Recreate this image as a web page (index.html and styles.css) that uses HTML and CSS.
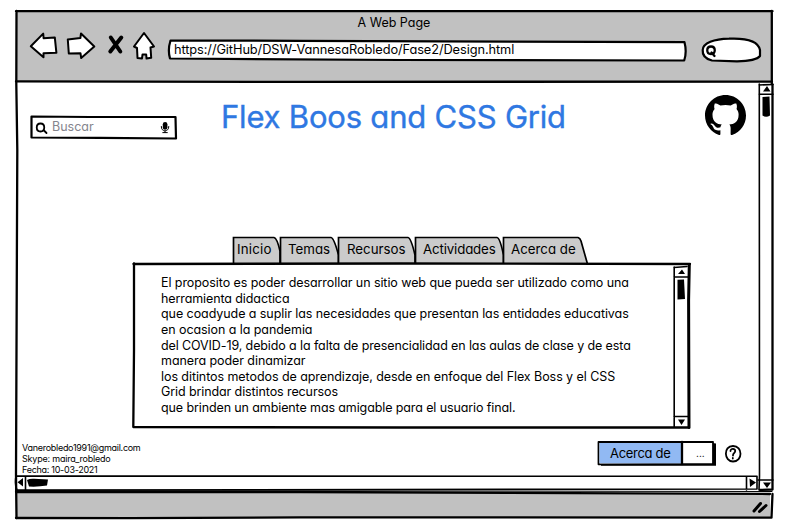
FILE: index.html
```html
<!DOCTYPE html>
<html lang="es">
<head>
<meta charset="utf-8">
<title>A Web Page</title>
<link rel="stylesheet" href="styles.css">
</head>
<body>
<div class="browser">
  <svg class="sketch frame" viewBox="14 9 760 512">
    <path class="grey" d="M16 11H772V82H16ZM16 493L770 493V517H16Z"/>
    <path class="line" d="M16 11.200H772.500M16.500 11L16.300 84L17.300 150L16 475L16.500 518M771.800 11V84"/>
    <path class="line" d="M16 81.400L300 81.900L772 81.600M16 492L300 492L770 494"/>
    <path class="line" d="M16 518L130 518.200L300 517.300L771.500 517.600L772.500 494"/>
    <path class="line thin" d="M16 490.500L772 491.500"/>
    <path class="line heavy" d="M754 511L760.500 503.500M759.500 511.500L766 505.500"/>
  </svg>
  <header class="chrome">
    <div class="window-title">A Web Page</div>
    <div class="toolbar">
      <svg class="nav" viewBox="28 30 130 32">
        <path class="shape" d="M30.800 46.300L43.200 33.600L43.600 38.200L54.800 37.400L56.400 52.800L43.500 53.200V57.200Z"/>
        <path class="shape" d="M67.800 39.500L80.400 38L81 33.500L94.300 46.500L81.200 58L80.500 53.300L68.800 53.500Z"/>
        <path class="cross" d="M110.800 37.500L120.300 51.500M121.300 37.500L110.300 51.500"/>
        <path class="shape" d="M144 33L154 46.500L150.500 47.500L151.200 57.800L146.500 58.500L146.200 54.500L142.500 54.500L142 58.500L137.500 58L137 48L134 46.500Z"/>
      </svg>
      <div class="address">
        <svg class="sketch" viewBox="166 38 522 26"><path class="shape box" d="M170.500 40.500L300 40.800L684.500 42.200Q687 52 684.200 60.500L400 60L170 58.500Q167.500 50 170.500 40.500Z"/></svg>
        <span class="t-url">https://GitHub/DSW-VannesaRobledo/Fase2/Design.html</span>
      </div>
      <svg class="quick" viewBox="700 36 64 28">
        <path class="shape box" d="M702.700 50C703 43 714 39 729 38.700C745 38 758 40 760 50V56Q756 61 737 61.300L712 60.500Q702 58 702.700 50Z"/>
        <path class="line" d="M711 46.500C706 46.500 706 54 711 54C716 54 716 46.500 711 46.500M711.500 52.500L714.500 56"/>
      </svg>
    </div>
  </header>
  <main class="page">
    <section class="content">
      <div class="top">
        <div class="search">
          <svg class="sketch" viewBox="30 114 148 27">
            <path class="shape box" d="M31.500 116.500L90 117L175.500 117L176 138.500L100 137.800L31.500 137.500Z"/>
            <path class="glass" d="M40.500 123.500C35.500 123.500 35.500 131.500 40.500 131.500C45.500 131.500 45.500 123.500 40.500 123.500M43.500 130L46.500 133"/>
            <rect x="162.800" y="122" width="4.600" height="7.800" rx="2.300"/>
            <path class="mic" d="M161.300 126.500C161 132.500 169 132.500 168.800 126.500M165 131V132.600M162.800 132.600H167.300"/>
          </svg>
          <span class="t-search">Buscar</span>
        </div>
        <h1 class="t-heading">Flex Boos and CSS Grid</h1>
        <svg class="logo" viewBox="0 0 16 16"><path d="M8 0C3.580 0 0 3.580 0 8c0 3.540 2.290 6.530 5.470 7.590.4.070.55-.17.55-.38 0-.19-.01-.82-.01-1.490-2.010.37-2.530-.49-2.690-.94-.09-.23-.48-.94-.82-1.130-.28-.15-.68-.52-.01-.53.63-.01 1.080.58 1.230.82.72 1.210 1.870.87 2.330.66.070-.52.28-.87.51-1.070-1.780-.2-3.640-.89-3.640-3.950 0-.87.31-1.590.82-2.150-.08-.2-.36-1.020.08-2.120 0 0 .67-.21 2.200.82.64-.18 1.320-.27 2-.27s1.360.09 2 .27c1.530-1.040 2.200-.82 2.200-.82.44 1.100.16 1.920.08 2.120.51.56.82 1.270.82 2.150 0 3.070-1.870 3.750-3.650 3.950.29.25.54.73.54 1.480 0 1.070-.01 1.930-.01 2.200 0 .21.15.46.55.38A8.010 8.010 0 0 0 16 8c0-4.420-3.580-8-8-8Z"/></svg>
      </div>
      <nav class="tabs">
        <svg class="sketch" viewBox="231 235 358 30">
          <path class="tab" d="M233.500 264V237.500H274Q277 238 280 251V264"/>
          <path class="tab" d="M280.500 264V237.500H331Q334 238 338.500 255V264"/>
          <path class="tab" d="M338.500 264V237.500H408Q411 238 415 255V264"/>
          <path class="tab" d="M415.500 264V237.500H497Q500 238 503.500 255V264"/>
          <path class="tab" d="M503.500 264V237.500H578Q580 238 581 241L587.500 264"/>
        </svg>
        <a class="t-inicio">Inicio</a><a class="t-temas">Temas</a><a class="t-recursos">Recursos</a><a class="t-activ">Actividades</a><a class="t-acerca">Acerca de</a>
      </nav>
      <article class="panel">
        <svg class="sketch" viewBox="131 262 560 167">
          <path class="line" d="M133.500 264L400 263.500L690 264"/>
          <path class="line" d="M134 263.500V350L133.300 427L400 427.500L689 427.500"/>
          <path class="line heavy2" d="M689.300 264.500L688.600 300L689 427.500"/>
          <path class="line thin2" d="M674.200 267V427M674 267.500L687 266.500M674 277H688M674 416.500H688"/>
          <path d="M678 274L682 269.500L685 274ZM678 419.500H685L681.500 425ZM677.500 279.800L684 279.500L685 299L677.500 299.500Z"/>
        </svg>
        <p><span class="l1">El proposito es poder desarrollar un sitio web que pueda ser utilizado como una</span>
        <span class="l2">herramienta didactica</span>
        <span class="l3">que coadyude a suplir las necesidades que presentan las entidades educativas</span>
        <span class="l4">en ocasion a la pandemia</span>
        <span class="l5">del COVID-19, debido a la falta de presencialidad en las aulas de clase y de esta</span>
        <span class="l6">manera poder dinamizar</span>
        <span class="l7">los ditintos metodos de aprendizaje, desde en enfoque del Flex Boss y el CSS</span>
        <span class="l8">Grid brindar distintos recursos</span>
        <span class="l9">que brinden un ambiente mas amigable para el usuario final.</span></p>
      </article>
      <div class="bottom">
        <address><span class="c1">Vanerobledo1991@gmail.com</span><span class="c2">Skype: maira_robledo</span><span class="c3">Fecha: 10-03-2021</span></address>
        <div class="split">
          <svg class="sketch" viewBox="596 440 120 27">
            <path d="M712.500 443L716 443.500V465.800H601V463H712.500Z"/>
            <path class="shape button" d="M598.500 442L713 441.800V464L598.500 464.300Z"/>
            <path class="blue" d="M599.500 443H681V463.300H599.500Z"/>
            <path class="line" d="M682 442V464"/>
          </svg>
          <span class="t-button">Acerca de</span><span class="t-dots">...</span>
        </div>
        <svg class="help" viewBox="723 444 20 20"><path class="glass" d="M733 446C723 446 724 461.500 733 461.500C743 461.500 743 446 733 446M730.500 451C730.500 448 735.500 448.500 735.200 451C735 453.500 733 453 733 455.500M732.800 458V458.500"/></svg>
      </div>
    </section>
    <svg class="vscroll" viewBox="758 83 16 408">
      <path class="line thin2" d="M759.300 84L759.500 476L759 490M759 85L773 84.500M759 94.300H773M758 480H773"/>
      <path class="line" d="M772.500 84.500L772.500 489.500L760 490"/>
      <path d="M763 91.500L767 86L770.500 91.500ZM763 482.500H771L767 488ZM762.500 97L769.500 96.500L770 115.500Q766 118 762.500 115.500Z"/>
    </svg>
    <svg class="hscroll" viewBox="14 474 746 19">
      <path class="line thin2" d="M16 476L757 476.300V489L17 490Q14.500 485 16 476M25.500 476V490M746.500 477V490"/>
      <path d="M17.500 482.300L23 478V486.500ZM749.500 478.500L756 482.500L750 487ZM27 480Q30 478.500 34 478.800L48 479.500L47 485.500Q38 487 29 486.500Z"/>
    </svg>
  </main>
</div>
</body>
</html>
```
FILE: styles.css
```css
* { box-sizing: border-box; }
body { margin: 0; background: #fff; color: #000; font-family: Inter, "Open Sans", sans-serif; font-feature-settings: "cv11" 1; font-size: 12.500px; }
svg { display: block; fill: #000; overflow: visible; }
.sketch { position: absolute; inset: 0; width: 100%; height: 100%; z-index: -1; }
.line, .glass, .mic { fill: none; stroke: #000; stroke-width: 2.300; stroke-linejoin: round; stroke-linecap: round; }
.glass { stroke-width: 1.800; }
.mic { stroke-width: 1; }
.thin { stroke-width: 1; }
.thin2 { stroke-width: 1.600; }
.heavy { stroke-width: 3; }
.heavy2 { stroke-width: 3; }
.grey { fill: #c1c1c1; }
.blue { fill: #91b9f3; }
.shape { fill: #fff; stroke: #000; stroke-width: 2; stroke-linejoin: round; }
.box { stroke-width: 2.200; }
.button { stroke-width: 1.800; }
.cross { fill: none; stroke: #000; stroke-width: 4; stroke-linecap: round; }
.tab { fill: #cbcbcb; stroke: #000; stroke-width: 1.700; }

.browser { position: relative; z-index: 0; margin: 9px 0 0 14px; width: 760px; height: 512px; }
.chrome { height: 74px; padding-top: 6px; }
.window-title { text-align: center; line-height: 15px; }
.toolbar { display: flex; align-items: flex-start; padding-left: 14px; }
.nav { width: 130px; height: 32px; }
.address { position: relative; width: 522px; height: 26px; margin: 8px 12px 0 8px; padding: 4px 8px; font-size: 12.800px; letter-spacing: -0.090px; line-height: 16px; white-space: nowrap; }
.quick { width: 64px; height: 28px; margin-top: 6px; }
.page { display: grid; grid-template-columns: 744px 16px; grid-template-rows: 391px 19px; }
.content { padding-top: 10px; }
.vscroll { width: 16px; height: 408px; grid-row: 1 / 3; grid-column: 2; }
.hscroll { width: 746px; height: 19px; grid-column: 1; grid-row: 2; }
.top { display: flex; height: 142px; padding-left: 16px; }
.search { position: relative; width: 148px; height: 27px; margin-top: 21px; padding: 5px 0 0 22px; color: #85858d; line-height: 16px; }
h1 { margin: 4px 0 0 43px; width: 484px; font-size: 31px; letter-spacing: -0.200px; font-weight: 400; line-height: 40px; color: #2f78e2; -webkit-text-stroke: 0.400px #2f78e2; white-space: nowrap; }
.logo { width: 41px; height: 41px; margin-top: 2px; }
.tabs { position: relative; width: 358px; height: 30px; margin-left: 217px; padding: 6px 0 0 6px; display: flex; line-height: 17px; font-size: 13.300px; white-space: nowrap; }
.t-inicio { width: 51px; letter-spacing: 0.200px; } .t-temas { width: 59px; } .t-recursos { width: 76px; } .t-activ { width: 88px; letter-spacing: -0.150px; }
.panel { position: relative; width: 560px; height: 167px; margin: -3px 0 0 117px; padding: 13px 0 0 30px; }
.panel p { margin: 0; line-height: 15.630px; white-space: nowrap; letter-spacing: -0.070px; }
.panel span, address span { display: block; width: max-content; }
.l2, .l8 { letter-spacing: -0.100px; }
.l5, .l9 { letter-spacing: -0.110px; }
.bottom { display: flex; padding-left: 8px; padding-top: 11px; }
address { width: 574px; font-style: normal; font-size: 9px; letter-spacing: -0.280px; line-height: 11px; padding-top: 2px; }
.c2 { letter-spacing: -0.200px; }
.split { position: relative; display: flex; width: 120px; height: 27px; padding: 5px 0 0 14px; line-height: 16px; font-size: 13px; letter-spacing: -0.300px; }
.t-button { width: 86px; white-space: nowrap; }
.t-dots { font-size: 10px; letter-spacing: 0; }
.help { width: 20px; height: 20px; margin: 4px 0 0 7px; }
```
